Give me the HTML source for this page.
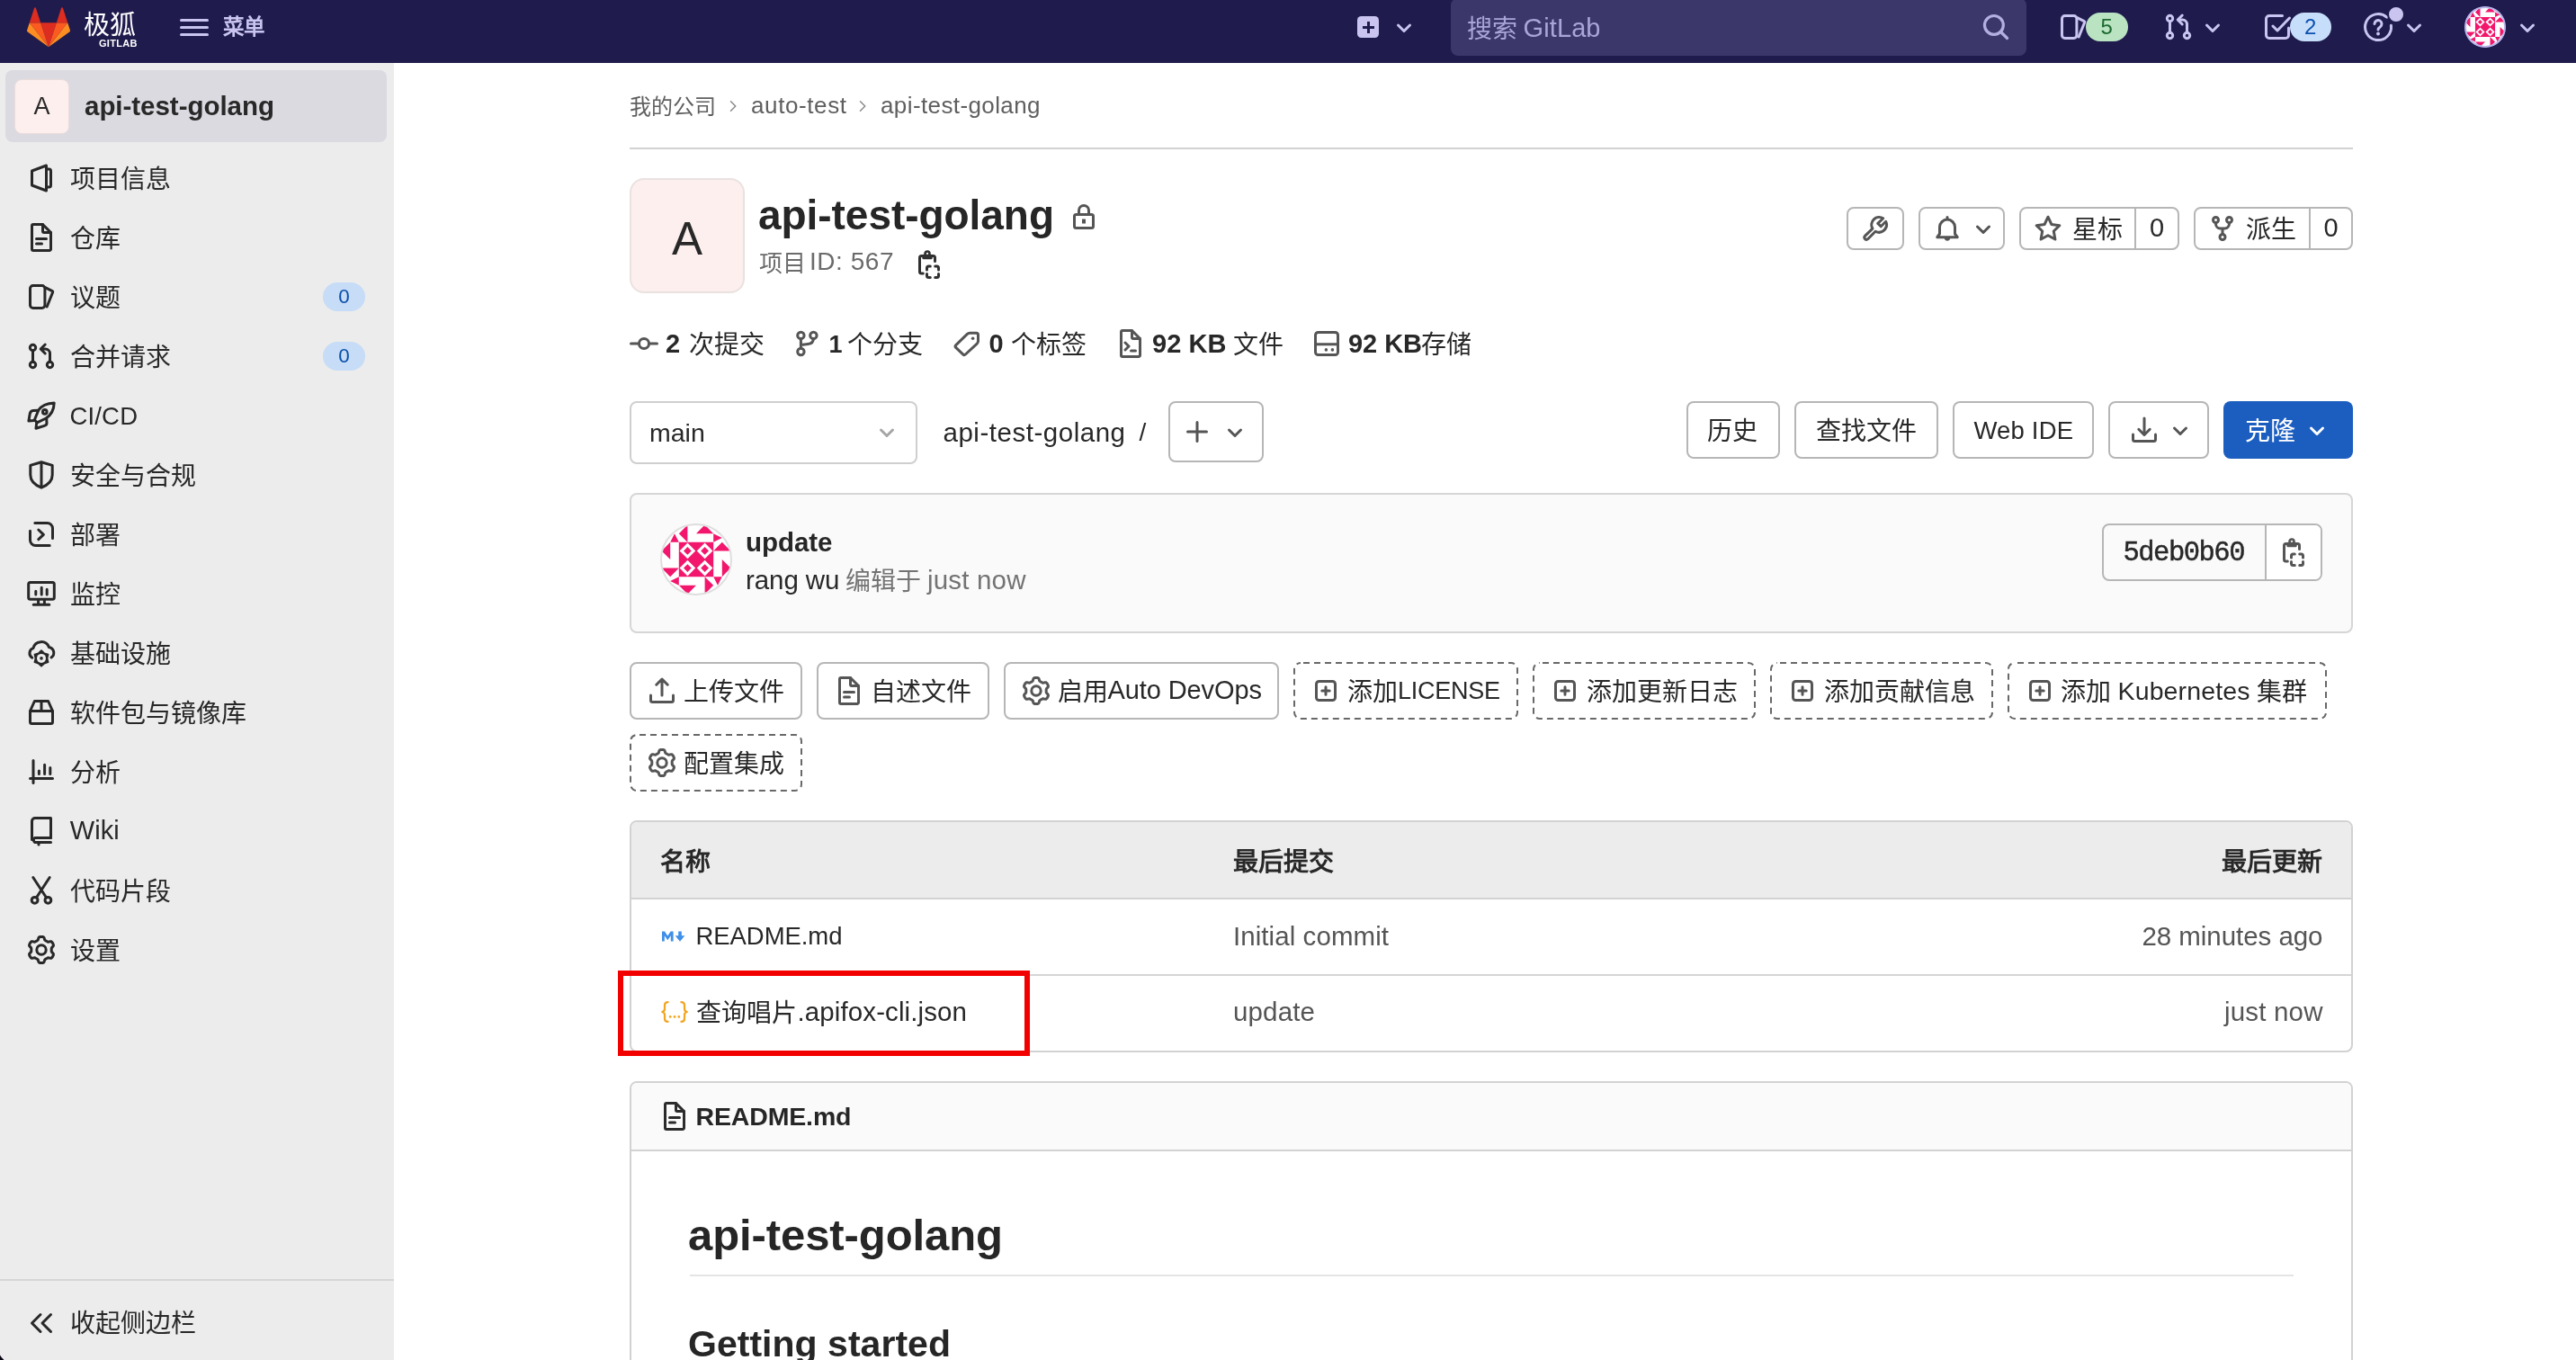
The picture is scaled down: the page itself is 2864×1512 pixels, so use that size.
<!DOCTYPE html>
<html lang="zh-CN"><head><meta charset="utf-8"><title>api-test-golang</title><style>
*{box-sizing:border-box;margin:0;padding:0}
html,body{width:2864px;height:1512px;overflow:hidden;background:#fff}
body{position:relative;font-family:"Liberation Sans", sans-serif;color:#282828;-webkit-font-smoothing:antialiased}
#app{position:absolute;left:0;top:0;width:2864px;height:1512px;overflow:hidden;will-change:transform}
div,svg.ic,.t{position:absolute}
.t{white-space:pre;line-height:1;display:block}
svg.ic{overflow:visible}
.btn{border:2px solid #b6b6b6;border-radius:8px;background:#fff}
</style></head>
<body>
<div id="app">
<div style="left:0px;top:0px;width:2864px;height:70px;background:#1f1b4d"></div>
<svg class="ic" style="left:30px;top:7.5px;width:48px;height:44.5px" viewBox="0 0 210 194"><path fill="#dc2d20" d="M105.06 193.66l38.64-118.92H66.42z"/><path fill="#fb5a20" d="M105.06 193.66L66.42 74.73H12.27z"/><path fill="#fc8d22" d="M12.27 74.73L.53 110.87c-1.07 3.3.1 6.9 2.9 8.94l101.63 73.84z"/><path fill="#dc2d20" d="M12.27 74.73h54.15L43.15 3.11c-1.2-3.69-6.41-3.69-7.61 0z"/><path fill="#fb5a20" d="M105.06 193.66l38.64-118.93h54.15z"/><path fill="#fc8d22" d="M197.85 74.73l11.75 36.14c1.07 3.3-.1 6.9-2.91 8.94L105.06 193.65z"/><path fill="#dc2d20" d="M197.85 74.73H143.7l23.27-71.62c1.2-3.69 6.41-3.69 7.61 0z"/></svg>
<span class="t" style="left:93.34px;top:14.15px;font-size:29px;color:#fff;font-weight:500;">极狐</span>
<span class="t" style="left:110.00px;top:43.19px;font-size:11.0px;color:#fff;font-weight:700;letter-spacing:0.312px;">GITLAB</span>
<div style="left:200px;top:20.5px;width:32px;height:3px;background:#c9c5f0;border-radius:1.5px"></div>
<div style="left:200px;top:28.5px;width:32px;height:3px;background:#c9c5f0;border-radius:1.5px"></div>
<div style="left:200px;top:36.5px;width:32px;height:3px;background:#c9c5f0;border-radius:1.5px"></div>
<span class="t" style="left:247.56px;top:19.31px;font-size:23.5px;color:#c9c5f0;font-weight:700;">菜单</span>
<div style="left:1509px;top:18px;width:24px;height:24px;background:#c9c5f0;border-radius:4.5px"></div>
<div style="left:1514.5px;top:28.5px;width:13px;height:3px;background:#1f1b4d"></div>
<div style="left:1519.5px;top:23.5px;width:3px;height:13px;background:#1f1b4d"></div>
<svg class="ic" style="left:1545px;top:14.75px;width:32px;height:32px;color:#c9c5f0;" viewBox="0 0 16 16" fill="none" stroke="currentColor" stroke-width="1.5" stroke-linecap="round" stroke-linejoin="round"><path d="M4.750 6.500 8 9.750l3.250-3.250" /></svg>
<div style="left:1613px;top:-2px;width:640px;height:64px;background:#3b376a;border-radius:8px"></div>
<span class="t" style="left:1630.88px;top:18.50px;font-size:28px;color:#a9a5d9;">搜索</span>
<span class="t" style="left:1693.50px;top:16.95px;font-size:29.0px;color:#a9a5d9;letter-spacing:0.111px;">GitLab</span>
<svg class="ic" style="left:2203px;top:14px;width:32px;height:32px;color:#b3afe0;" viewBox="0 0 16 16" fill="none" stroke="currentColor" stroke-width="1.6" stroke-linecap="round" stroke-linejoin="round"><circle cx="6.950" cy="6.950" r="5.200"/><path d="M10.750 10.750 14.300 14.250" /></svg>
<svg class="ic" style="left:2289px;top:14px;width:32px;height:32px;color:#c9c5f0;" viewBox="0 0 16 16" fill="none" stroke="currentColor" stroke-width="1.5" stroke-linecap="round" stroke-linejoin="round"><rect x="1.75" y="1.8" width="8.2" height="12.4" rx="1.6"/><path d="M10.400 2.900l3.700 1.900a.5.5 0 0 1 .250.600L11.100 13.500" /></svg>
<div style="left:2319px;top:14px;width:47px;height:32px;background:#b9e3c1;border-radius:16px"></div>
<span class="t" style="left:2335.50px;top:18.18px;font-size:24px;color:#1d6a31;">5</span>
<svg class="ic" style="left:2406px;top:14px;width:32px;height:32px;color:#c9c5f0;" viewBox="0 0 16 16" fill="none" stroke="currentColor" stroke-width="1.5" stroke-linecap="round" stroke-linejoin="round"><circle cx="3.25" cy="3.25" r="1.6"/><circle cx="3.25" cy="12.75" r="1.6"/><circle cx="12.75" cy="12.75" r="1.6"/><path d="M3.25 4.9v6.2" /><path d="M10.100 1.500 7.600 4l2.500 2.500" /><path d="M8 4h2.25a2.5 2.5 0 0 1 2.5 2.5v4.6" /></svg>
<svg class="ic" style="left:2444px;top:14.75px;width:32px;height:32px;color:#c9c5f0;" viewBox="0 0 16 16" fill="none" stroke="currentColor" stroke-width="1.5" stroke-linecap="round" stroke-linejoin="round"><path d="M4.750 6.500 8 9.750l3.250-3.250" /></svg>
<svg class="ic" style="left:2516px;top:14px;width:32px;height:32px;color:#c9c5f0;" viewBox="0 0 16 16" fill="none" stroke="currentColor" stroke-width="1.5" stroke-linecap="round" stroke-linejoin="round"><path d="M14.250 8.500v4a1.750 1.750 0 0 1-1.750 1.750h-9A1.750 1.750 0 0 1 1.750 12.500v-9A1.750 1.750 0 0 1 3.500 1.750h7.250" /><path d="M5.500 7.500 8 10l6.750-7" /></svg>
<div style="left:2546px;top:14px;width:46px;height:32px;background:#c7defa;border-radius:16px"></div>
<span class="t" style="left:2562.00px;top:18.18px;font-size:24px;color:#0b50b0;">2</span>
<svg class="ic" style="left:2628px;top:14px;width:32px;height:32px;color:#c9c5f0;" viewBox="0 0 16 16" fill="none" stroke="currentColor" stroke-width="1.5" stroke-linecap="round" stroke-linejoin="round"><path d="M12.800 2.600A7.250 7.250 0 1 0 15.200 7.100" /><path d="M6 6.250a2 2 0 1 1 3.100 1.700c-.700.450-1.100.850-1.100 1.550" /><circle cx="8" cy="11.750" r=".95" fill="currentColor" stroke="none"/></svg>
<div style="left:2654px;top:6px;width:20px;height:20px;background:#c9c5f0;border-radius:50%;border:2px solid #1f1b4d"></div>
<svg class="ic" style="left:2668px;top:14.75px;width:32px;height:32px;color:#c9c5f0;" viewBox="0 0 16 16" fill="none" stroke="currentColor" stroke-width="1.5" stroke-linecap="round" stroke-linejoin="round"><path d="M4.750 6.500 8 9.750l3.250-3.250" /></svg>
<svg class="ic" style="left:2740px;top:7px;width:46px;height:46px" viewBox="0 0 80 80"><defs><clipPath id="cn"><circle cx="40" cy="40" r="39.2"/></clipPath></defs><g clip-path="url(#cn)"><rect width="80" height="80" fill="#fff"/><path d="M20.80 20.80L59.20 20.80L59.20 59.20L20.80 59.20z" fill="#f2176c"/><path d="M30.40 21.57L39.23 30.40L30.40 39.23L21.57 30.40z" fill="#fff"/><path d="M30.40 25.98L34.82 30.40L30.40 34.82L25.98 30.40z" fill="#f2176c"/><path d="M30.40 40.77L39.23 49.60L30.40 58.43L21.57 49.60z" fill="#fff"/><path d="M30.40 45.18L34.82 49.60L30.40 54.02L25.98 49.60z" fill="#f2176c"/><path d="M49.60 21.57L58.43 30.40L49.60 39.23L40.77 30.40z" fill="#fff"/><path d="M49.60 25.98L54.02 30.40L49.60 34.82L45.18 30.40z" fill="#f2176c"/><path d="M49.60 40.77L58.43 49.60L49.60 58.43L40.77 49.60z" fill="#fff"/><path d="M49.60 45.18L54.02 49.60L49.60 54.02L45.18 49.60z" fill="#f2176c"/><path d="M11.20 20.80L20.80 20.80L16.00 11.20zM59.20 11.20L59.20 20.80L68.80 16.00zM68.80 59.20L59.20 59.20L64.00 68.80zM20.80 68.80L20.80 59.20L11.20 64.00zM30.40 1.60L30.40 20.80L20.80 11.20zM78.40 30.40L59.20 30.40L68.80 20.80zM49.60 78.40L49.60 59.20L59.20 68.80zM1.60 49.60L20.80 49.60L11.20 59.20zM40.00 11.20L59.20 11.20L49.60 1.60zM68.80 40.00L68.80 59.20L78.40 49.60zM40.00 68.80L20.80 68.80L30.40 78.40zM11.20 40.00L11.20 20.80L1.60 30.40z" fill="#f2176c"/></g><circle cx="40" cy="40" r="38.26" fill="none" stroke="#b9b4ea" stroke-width="3.48"/></svg>
<svg class="ic" style="left:2794px;top:14.75px;width:32px;height:32px;color:#c9c5f0;" viewBox="0 0 16 16" fill="none" stroke="currentColor" stroke-width="1.5" stroke-linecap="round" stroke-linejoin="round"><path d="M4.750 6.500 8 9.750l3.250-3.250" /></svg>
<div style="left:0px;top:70px;width:438px;height:1442px;background:#ececec"></div>
<div style="left:6px;top:78px;width:424px;height:80px;background:#dbdae0;border-radius:8px"></div>
<div style="left:15.5px;top:87.5px;width:61px;height:61px;background:#fcefed;border-radius:8px;border:1.5px solid #e9dcdb"></div>
<span class="t" style="left:37.50px;top:105.14px;font-size:27.0px;color:#282828;">A</span>
<span class="t" style="left:94.00px;top:102.53px;font-size:29.5px;color:#282828;font-weight:700;letter-spacing:-0.030px;">api-test-golang</span>
<svg class="ic" style="left:30px;top:182px;width:32px;height:32px;color:#282828;" viewBox="0 0 16 16" fill="none" stroke="currentColor" stroke-width="1.5" stroke-linecap="round" stroke-linejoin="round"><path d="M10.75 1 2.75 4v8l8 3z" /><path d="M10.75 3h1.5a1 1 0 0 1 1 1v8a1 1 0 0 1-1 1h-1.5" /></svg>
<span class="t" style="left:77.88px;top:185.50px;font-size:28px;color:#282828;">项目信息</span>
<svg class="ic" style="left:30px;top:248px;width:32px;height:32px;color:#282828;" viewBox="0 0 16 16" fill="none" stroke="currentColor" stroke-width="1.5" stroke-linecap="round" stroke-linejoin="round"><path d="M3.5.75h5.25l4.5 4.5v9.25a.75.75 0 0 1-.75.75h-9a.75.75 0 0 1-.75-.75V1.5a.75.75 0 0 1 .75-.75z" /><path d="M8.75.75v3.75a.75.75 0 0 0 .75.75h3.75" /><path d="M5.25 8.75h5.5M5.25 11.5h3" /></svg>
<span class="t" style="left:77.88px;top:251.50px;font-size:28px;color:#282828;">仓库</span>
<svg class="ic" style="left:30px;top:314px;width:32px;height:32px;color:#282828;" viewBox="0 0 16 16" fill="none" stroke="currentColor" stroke-width="1.5" stroke-linecap="round" stroke-linejoin="round"><rect x="1.75" y="1.8" width="8.2" height="12.4" rx="1.6"/><path d="M10.400 2.900l3.700 1.900a.5.5 0 0 1 .250.600L11.100 13.500" /></svg>
<span class="t" style="left:77.88px;top:317.50px;font-size:28px;color:#282828;">议题</span>
<div style="left:359px;top:314px;width:47px;height:32px;background:#c6dcf7;border-radius:16px"></div>
<span class="t" style="left:376.30px;top:318.95px;font-size:22.5px;color:#0b4fa8;">0</span>
<svg class="ic" style="left:30px;top:380px;width:32px;height:32px;color:#282828;" viewBox="0 0 16 16" fill="none" stroke="currentColor" stroke-width="1.5" stroke-linecap="round" stroke-linejoin="round"><circle cx="3.25" cy="3.25" r="1.6"/><circle cx="3.25" cy="12.75" r="1.6"/><circle cx="12.75" cy="12.75" r="1.6"/><path d="M3.25 4.9v6.2" /><path d="M10.100 1.500 7.600 4l2.500 2.500" /><path d="M8 4h2.25a2.5 2.5 0 0 1 2.5 2.5v4.6" /></svg>
<span class="t" style="left:77.88px;top:383.50px;font-size:28px;color:#282828;">合并请求</span>
<div style="left:359px;top:380px;width:47px;height:32px;background:#c6dcf7;border-radius:16px"></div>
<span class="t" style="left:376.30px;top:384.95px;font-size:22.5px;color:#0b4fa8;">0</span>
<svg class="ic" style="left:30px;top:446px;width:32px;height:32px;color:#282828;" viewBox="0 0 16 16" fill="none" stroke="currentColor" stroke-width="1.5" stroke-linecap="round" stroke-linejoin="round"><path d="M15.100.950C11.200 1.100 8 2.600 6.400 5L4.200 10.400l1.400 1.500 5-2.400C13.300 7.700 15 4.600 15.100.950z" /><circle cx="9.900" cy="5.950" r="1.150"/><path d="M6.200 5.150 3.300 5.200C2.300 5.300 1.750 6.100 1.600 7.100L.950 10.950 4 10.800" /><path d="M10.850 9.600 11 12.300c0 .800-.600 1.200-1.300 1.400L5 15.100l.350-3" /></svg>
<span class="t" style="left:77.50px;top:448.72px;font-size:27.5px;color:#282828;letter-spacing:0.157px;">CI/CD</span>
<svg class="ic" style="left:30px;top:512px;width:32px;height:32px;color:#282828;" viewBox="0 0 16 16" fill="none" stroke="currentColor" stroke-width="1.5" stroke-linecap="round" stroke-linejoin="round"><path d="M8 .85 1.9 2.7V8c0 3.2 2.2 5.5 6.1 7.1 3.900-1.600 6.100-3.900 6.100-7.100V2.700z" /><path d="M8 1.2v13.6" /></svg>
<span class="t" style="left:77.88px;top:515.50px;font-size:28px;color:#282828;">安全与合规</span>
<svg class="ic" style="left:30px;top:578px;width:32px;height:32px;color:#282828;" viewBox="0 0 16 16" fill="none" stroke="currentColor" stroke-width="1.5" stroke-linecap="round" stroke-linejoin="round"><path d="M4.4 1.75h6.85a3 3 0 0 1 3 3V10.300" /><path d="M1.75 6.1v5.15a3 3 0 0 0 3 3H12.600" /><path d="M6.4 5.5 9.2 8.150 6.400 10.800" /></svg>
<span class="t" style="left:77.88px;top:581.50px;font-size:28px;color:#282828;">部署</span>
<svg class="ic" style="left:30px;top:644px;width:32px;height:32px;color:#282828;" viewBox="0 0 16 16" fill="none" stroke="currentColor" stroke-width="1.5" stroke-linecap="round" stroke-linejoin="round"><rect x=".85" y="1.75" width="14.3" height="9.4" rx="1"/><path d="M6.3 11.2v2.8M9.7 11.2v2.8M3.600 14.150h8.800" /><path d="M4.9 6.600v1.900M8.100 4.600v3.900M11.100 5.600v2.900" /></svg>
<span class="t" style="left:77.88px;top:647.50px;font-size:28px;color:#282828;">监控</span>
<svg class="ic" style="left:30px;top:710px;width:32px;height:32px;color:#282828;" viewBox="0 0 16 16" fill="none" stroke="currentColor" stroke-width="1.5" stroke-linecap="round" stroke-linejoin="round"><path d="M2.900 10.600A2.900 2.900 0 0 1 3.450 5.350 4.600 4.600 0 0 1 12.200 4.700 3.200 3.200 0 0 1 13.500 10.500" /><path d="M8.00 6.60L6.38 8.14L4.23 8.78L4.75 10.95L4.23 13.12L6.37 13.76L8.00 15.30L9.62 13.76L11.77 13.12L11.25 10.95L11.77 8.77L9.62 8.14z" fill="currentColor" stroke-width=".9"/><circle cx="8" cy="10.950" r="2.500" fill="#ececec" stroke="none"/><circle cx="8" cy="10.950" r=".900" fill="currentColor" stroke="none"/></svg>
<span class="t" style="left:77.88px;top:713.50px;font-size:28px;color:#282828;">基础设施</span>
<svg class="ic" style="left:30px;top:776px;width:32px;height:32px;color:#282828;" viewBox="0 0 16 16" fill="none" stroke="currentColor" stroke-width="1.5" stroke-linecap="round" stroke-linejoin="round"><path d="M1.75 7.25 4.2 1.75h7.6l2.45 5.5v6a1 1 0 0 1-1 1H2.75a1 1 0 0 1-1-1z" /><path d="M1.75 7.25h12.5M8 1.75v5.500" /></svg>
<span class="t" style="left:77.88px;top:779.50px;font-size:28px;color:#282828;">软件包与镜像库</span>
<svg class="ic" style="left:30px;top:842px;width:32px;height:32px;color:#282828;" viewBox="0 0 16 16" fill="none" stroke="currentColor" stroke-width="1.5" stroke-linecap="round" stroke-linejoin="round"><path d="M3.500 1.750v12.500M1.750 11.750h12.500" /><path d="M6.700 7.500v1.700M9.800 4.100v5.100M12.900 5.800v3.400" /></svg>
<span class="t" style="left:77.88px;top:845.50px;font-size:28px;color:#282828;">分析</span>
<svg class="ic" style="left:30px;top:908px;width:32px;height:32px;color:#282828;" viewBox="0 0 16 16" fill="none" stroke="currentColor" stroke-width="1.5" stroke-linecap="round" stroke-linejoin="round"><path d="M13.250 11.700V.750H4.500a1.750 1.750 0 0 0-1.750 1.750v10.200" /><path d="M13.250 11.750h-8.900a1.500 1.500 0 0 0 0 2.500h8.900" /><path d="M6.500 14.250v1.300" /></svg>
<span class="t" style="left:77.80px;top:909.45px;font-size:29.0px;color:#282828;letter-spacing:0.079px;">Wiki</span>
<svg class="ic" style="left:30px;top:974px;width:32px;height:32px;color:#282828;" viewBox="0 0 16 16" fill="none" stroke="currentColor" stroke-width="1.5" stroke-linecap="round" stroke-linejoin="round"><circle cx="4.3" cy="13.4" r="1.7"/><circle cx="11.7" cy="13.4" r="1.7"/><path d="M5.300 11.900 12.600 .750M10.700 11.900 3.400 .750" /></svg>
<span class="t" style="left:77.88px;top:977.50px;font-size:28px;color:#282828;">代码片段</span>
<svg class="ic" style="left:30px;top:1040px;width:32px;height:32px;color:#282828;" viewBox="0 0 16 16" fill="none" stroke="currentColor" stroke-width="1.5" stroke-linecap="round" stroke-linejoin="round"><path d="M13.60 8.00 L13.60 7.76 L13.60 7.51 L13.60 7.26 L13.67 7.00 L13.86 6.70 L14.23 6.33 L14.58 5.93 L14.72 5.56 L14.70 5.23 L14.60 4.92 L14.47 4.63 L14.32 4.35 L14.15 4.08 L13.97 3.82 L13.75 3.59 L13.48 3.41 L13.09 3.34 L12.56 3.44 L12.05 3.58 L11.70 3.59 L11.44 3.52 L11.22 3.40 L11.01 3.27 L10.80 3.15 L10.59 3.03 L10.37 2.91 L10.16 2.78 L9.97 2.59 L9.80 2.28 L9.67 1.77 L9.49 1.26 L9.24 0.96 L8.95 0.82 L8.63 0.74 L8.32 0.71 L8.00 0.70 L7.68 0.71 L7.37 0.74 L7.05 0.82 L6.76 0.96 L6.51 1.26 L6.33 1.77 L6.20 2.28 L6.03 2.59 L5.84 2.78 L5.63 2.91 L5.41 3.03 L5.20 3.15 L4.99 3.27 L4.78 3.40 L4.56 3.52 L4.30 3.59 L3.95 3.58 L3.44 3.44 L2.91 3.34 L2.52 3.41 L2.25 3.59 L2.03 3.82 L1.85 4.08 L1.68 4.35 L1.53 4.63 L1.40 4.92 L1.30 5.23 L1.28 5.56 L1.42 5.93 L1.77 6.33 L2.14 6.70 L2.33 7.00 L2.40 7.26 L2.40 7.51 L2.40 7.76 L2.40 8.00 L2.40 8.24 L2.40 8.49 L2.40 8.74 L2.33 9.00 L2.14 9.30 L1.77 9.67 L1.42 10.07 L1.28 10.44 L1.30 10.77 L1.40 11.08 L1.53 11.37 L1.68 11.65 L1.85 11.92 L2.03 12.18 L2.25 12.41 L2.52 12.59 L2.91 12.66 L3.44 12.56 L3.95 12.42 L4.30 12.41 L4.56 12.48 L4.78 12.60 L4.99 12.73 L5.20 12.85 L5.41 12.97 L5.63 13.09 L5.84 13.22 L6.03 13.41 L6.20 13.72 L6.33 14.23 L6.51 14.74 L6.76 15.04 L7.05 15.18 L7.37 15.26 L7.68 15.29 L8.00 15.30 L8.32 15.29 L8.63 15.26 L8.95 15.18 L9.24 15.04 L9.49 14.74 L9.67 14.23 L9.80 13.72 L9.97 13.41 L10.16 13.22 L10.37 13.09 L10.59 12.97 L10.80 12.85 L11.01 12.73 L11.22 12.60 L11.44 12.48 L11.70 12.41 L12.05 12.42 L12.56 12.56 L13.09 12.66 L13.48 12.59 L13.75 12.41 L13.97 12.18 L14.15 11.92 L14.32 11.65 L14.47 11.37 L14.60 11.08 L14.70 10.77 L14.72 10.44 L14.58 10.07 L14.23 9.67 L13.86 9.30 L13.67 9.00 L13.60 8.74 L13.60 8.49 L13.60 8.24Z" /><circle cx="8" cy="8" r="2.6"/></svg>
<span class="t" style="left:77.88px;top:1043.50px;font-size:28px;color:#282828;">设置</span>
<div style="left:0px;top:1422px;width:438px;height:2px;background:#d6d6d6"></div>
<svg class="ic" style="left:30px;top:1454.5px;width:32px;height:32px;color:#282828;" viewBox="0 0 16 16" fill="none" stroke="currentColor" stroke-width="1.5" stroke-linecap="round" stroke-linejoin="round"><path d="M7.500 3.250 2.750 8l4.750 4.750M13.250 3.250 8.500 8l4.750 4.750" /></svg>
<span class="t" style="left:78.48px;top:1458.00px;font-size:28px;color:#282828;">收起侧边栏</span>
<svg class="ic" style="left:0;top:1506px;width:5px;height:6px" viewBox="0 0 5 6"><path d="M0 .400Q1.600 3.400 4.500 6H0z" fill="#0c0714"/></svg>
<span class="t" style="left:699.54px;top:106.88px;font-size:24px;color:#5f5f5f;">我的公司</span>
<svg class="ic" style="left:806.5px;top:110px;width:16px;height:16px;color:#8a8a8a" viewBox="0 0 16 16" fill="none" stroke="currentColor" stroke-width="1.5" stroke-linecap="round" stroke-linejoin="round"><path d="M5.5 2.750 10.750 8l-5.250 5.250"/></svg>
<span class="t" style="left:835.00px;top:104.49px;font-size:26.0px;color:#5f5f5f;letter-spacing:0.603px;">auto-test</span>
<svg class="ic" style="left:950.5px;top:110px;width:16px;height:16px;color:#8a8a8a" viewBox="0 0 16 16" fill="none" stroke="currentColor" stroke-width="1.5" stroke-linecap="round" stroke-linejoin="round"><path d="M5.5 2.750 10.750 8l-5.250 5.250"/></svg>
<span class="t" style="left:979.00px;top:104.49px;font-size:26.0px;color:#5f5f5f;letter-spacing:0.393px;">api-test-golang</span>
<div style="left:700px;top:164px;width:1916px;height:2px;background:#d2d2d2"></div>
<div style="left:700px;top:198px;width:128px;height:128px;background:#fcefed;border-radius:16px;border:2px solid #e9e2e1"></div>
<span class="t" style="left:747.00px;top:240.33px;font-size:51.0px;color:#282828;">A</span>
<span class="t" style="left:843.00px;top:215.56px;font-size:46.0px;color:#262626;font-weight:700;letter-spacing:-0.048px;">api-test-golang</span>
<svg class="ic" style="left:1189px;top:224.5px;width:32px;height:32px;color:#555555;" viewBox="0 0 16 16" fill="none" stroke="currentColor" stroke-width="1.5" stroke-linecap="round" stroke-linejoin="round"><rect x="2.750" y="6.750" width="10.500" height="7.500" rx="1"/><path d="M5.250 6.500V4.500a2.750 2.750 0 0 1 5.500 0v2" /><rect x="7" y="9.250" width="2" height="2.500" fill="currentColor" stroke="none"/></svg>
<span class="t" style="left:843.96px;top:279.69px;font-size:26px;color:#6b6b6b;">项目</span>
<span class="t" style="left:900.00px;top:277.30px;font-size:28.0px;color:#6b6b6b;letter-spacing:0.537px;">ID: 567</span>
<svg class="ic" style="left:1017px;top:278px;width:32px;height:32px;color:#303030;" viewBox="0 0 16 16" fill="none" stroke="currentColor" stroke-width="1.5" stroke-linecap="round" stroke-linejoin="round"><path d="M4.600 3.250H3.750a1 1 0 0 0-1 1v7.700a1 1 0 0 0 1 1h.900" /><path d="M9.400 3.250h.850a1 1 0 0 1 1 1v2" /><circle cx="7" cy="2" r="1.250" stroke-width="1.300"/><path d="M4.900 4.400V3.150h4.200v1.250z" /><path d="M6.750 10.950v-1a1 1 0 0 1 1-1h.900M11.350 8.950h.900a1 1 0 0 1 1 1v1M13.250 13.250v1a1 1 0 0 1-1 1h-.900M8.650 15.250h-.900a1 1 0 0 1-1-1v-1" /></svg>
<div class="btn" style="left:2053px;top:230px;width:64px;height:48px;"></div>
<svg class="ic" style="left:2069px;top:238px;width:32px;height:32px;color:#555555;" viewBox="0 0 16 16" fill="none" stroke="currentColor" stroke-width="1.5" stroke-linecap="round" stroke-linejoin="round"><path d="M12.330 2.390A4.200 4.200 0 0 0 6.460 8.050L2.200 12.200A1.170 1.170 0 0 0 3.850 13.850L8.060 9.620A4.200 4.200 0 0 0 13.850 4.150L11.100 6.900 9.400 5.200z" /></svg>
<div class="btn" style="left:2133px;top:230px;width:96px;height:48px;"></div>
<svg class="ic" style="left:2149px;top:238px;width:32px;height:32px;color:#555555;" viewBox="0 0 16 16" fill="none" stroke="currentColor" stroke-width="1.5" stroke-linecap="round" stroke-linejoin="round"><path d="M3.750 11V7.300a4.250 4.250 0 0 1 8.500 0V11l1.350 1.850H2.400z" /><path d="M8 1.800v.700" /><path d="M6.900 13.700a1.200 1.200 0 0 0 2.200 0z" fill="currentColor" stroke-width="1"/></svg>
<svg class="ic" style="left:2189px;top:238.75px;width:32px;height:32px;color:#555555;" viewBox="0 0 16 16" fill="none" stroke="currentColor" stroke-width="1.5" stroke-linecap="round" stroke-linejoin="round"><path d="M4.750 6.500 8 9.750l3.250-3.250" /></svg>
<div class="btn" style="left:2245px;top:230px;width:178px;height:48px;"></div>
<div style="left:2373px;top:232px;width:2px;height:44px;background:#b6b6b6"></div>
<svg class="ic" style="left:2261px;top:238px;width:32px;height:32px;color:#555555;" viewBox="0 0 16 16" fill="none" stroke="currentColor" stroke-width="1.5" stroke-linecap="round" stroke-linejoin="round"><path d="M8 1.600l1.950 4.150 4.450.600-3.250 3.150.800 4.500L8 11.850 4.050 14l.800-4.500L1.600 6.350l4.450-.600z" /></svg>
<span class="t" style="left:2303.88px;top:241.50px;font-size:28px;color:#282828;">星标</span>
<span class="t" style="left:2390.00px;top:239.45px;font-size:29.0px;color:#282828;">0</span>
<div class="btn" style="left:2439px;top:230px;width:177px;height:48px;"></div>
<div style="left:2566.5px;top:232px;width:2px;height:44px;background:#b6b6b6"></div>
<svg class="ic" style="left:2455px;top:238px;width:32px;height:32px;color:#555555;" viewBox="0 0 16 16" fill="none" stroke="currentColor" stroke-width="1.5" stroke-linecap="round" stroke-linejoin="round"><circle cx="4.25" cy="3.25" r="1.5"/><circle cx="11.75" cy="3.25" r="1.5"/><circle cx="8" cy="12.75" r="1.5"/><path d="M4.250 4.800v.700a2.500 2.500 0 0 0 2.500 2.500h2.500a2.500 2.500 0 0 0 2.500-2.500v-.700M8 8v3.200" /></svg>
<span class="t" style="left:2496.88px;top:241.50px;font-size:28px;color:#282828;">派生</span>
<span class="t" style="left:2583.50px;top:239.45px;font-size:29.0px;color:#282828;">0</span>
<svg class="ic" style="left:700px;top:366px;width:32px;height:32px;color:#555555;" viewBox="0 0 16 16" fill="none" stroke="currentColor" stroke-width="1.5" stroke-linecap="round" stroke-linejoin="round"><circle cx="8" cy="8" r="2.750"/><path d="M.750 8H5M11 8h4.250" /></svg>
<span class="t" style="left:740.00px;top:367.95px;font-size:29.0px;color:#282828;font-weight:700;">2</span>
<span class="t" style="left:765.88px;top:370.00px;font-size:28px;color:#282828;">次提交</span>
<svg class="ic" style="left:881.5px;top:366px;width:32px;height:32px;color:#555555;" viewBox="0 0 16 16" fill="none" stroke="currentColor" stroke-width="1.5" stroke-linecap="round" stroke-linejoin="round"><circle cx="4.2" cy="3.45" r="1.85"/><circle cx="4.2" cy="12.5" r="1.85"/><circle cx="11.2" cy="3.45" r="1.85"/><path d="M4.200 5.300v5.350M11.200 5.300c0 1.800-1.200 2.800-3 3L4.200 8.700" /></svg>
<span class="t" style="left:921.50px;top:369.64px;font-size:27.0px;color:#282828;font-weight:700;">1</span>
<span class="t" style="left:942.38px;top:370.00px;font-size:28px;color:#282828;">个分支</span>
<svg class="ic" style="left:1059px;top:366px;width:32px;height:32px;color:#555555;" viewBox="0 0 16 16" fill="none" stroke="currentColor" stroke-width="1.5" stroke-linecap="round" stroke-linejoin="round"><path d="M1.900 8.800 8.200 2.700a2 2 0 0 1 1.400-.550h3.650a1 1 0 0 1 1 1v3.500a2 2 0 0 1-.650 1.450L7.200 14a1 1 0 0 1-1.400-.050L1.850 10.200a1 1 0 0 1 .050-1.400z" /><circle cx="11.300" cy="5.150" r=".9" fill="currentColor" stroke="none"/></svg>
<span class="t" style="left:1099.50px;top:367.95px;font-size:29.0px;color:#282828;font-weight:700;">0</span>
<span class="t" style="left:1124.38px;top:370.00px;font-size:28px;color:#282828;">个标签</span>
<svg class="ic" style="left:1241px;top:366px;width:32px;height:32px;color:#555555;" viewBox="0 0 16 16" fill="none" stroke="currentColor" stroke-width="1.5" stroke-linecap="round" stroke-linejoin="round"><path d="M3.500.750h5.250l4.500 4.500v9.250a.750.750 0 0 1-.750.750h-9a.750.750 0 0 1-.750-.750V1.500a.750.750 0 0 1 .750-.750z" /><path d="M8.750.750v3.750a.750.750 0 0 0 .750.750h3.750" /><path d="M5 7.500 7 9.500 5 11.500M8.250 12h2.500" /></svg>
<span class="t" style="left:1281.00px;top:367.95px;font-size:29.0px;color:#282828;font-weight:700;letter-spacing:0.073px;">92 KB</span>
<span class="t" style="left:1370.88px;top:370.00px;font-size:28px;color:#282828;">文件</span>
<svg class="ic" style="left:1459px;top:366px;width:32px;height:32px;color:#555555;" viewBox="0 0 16 16" fill="none" stroke="currentColor" stroke-width="1.5" stroke-linecap="round" stroke-linejoin="round"><rect x="1.750" y="1.750" width="12.500" height="12.500" rx="1.500"/><path d="M1.750 8.400h12.500" /><circle cx="7.700" cy="11.450" r=".9" fill="currentColor" stroke="none"/><circle cx="11.200" cy="11.450" r=".9" fill="currentColor" stroke="none"/></svg>
<span class="t" style="left:1499.00px;top:367.95px;font-size:29.0px;color:#282828;font-weight:700;letter-spacing:-0.052px;">92 KB</span>
<span class="t" style="left:1580.38px;top:370.00px;font-size:28px;color:#282828;">存储</span>
<div style="left:700px;top:446px;width:320px;height:70px;border:2px solid #cfcfcf;border-radius:8px;background:#fff"></div>
<span class="t" style="left:721.90px;top:466.87px;font-size:28.5px;color:#282828;letter-spacing:0.071px;">main</span>
<svg class="ic" style="left:969.5px;top:464.75px;width:32px;height:32px;color:#a6a6a6;" viewBox="0 0 16 16" fill="none" stroke="currentColor" stroke-width="1.5" stroke-linecap="round" stroke-linejoin="round"><path d="M4.750 6.500 8 9.750l3.250-3.250" /></svg>
<span class="t" style="left:1048.50px;top:466.03px;font-size:29.5px;color:#282828;letter-spacing:0.524px;">api-test-golang</span>
<span class="t" style="left:1266.50px;top:467.30px;font-size:28px;color:#282828;">/</span>
<div class="btn" style="left:1299px;top:446px;width:106px;height:68px;"></div>
<svg class="ic" style="left:1315px;top:464px;width:32px;height:32px;color:#555555;" viewBox="0 0 16 16" fill="none" stroke="currentColor" stroke-width="1.5" stroke-linecap="round" stroke-linejoin="round"><path d="M8 2.750v10.500M2.750 8h10.500" /></svg>
<svg class="ic" style="left:1357px;top:464.75px;width:32px;height:32px;color:#555555;" viewBox="0 0 16 16" fill="none" stroke="currentColor" stroke-width="1.5" stroke-linecap="round" stroke-linejoin="round"><path d="M4.750 6.500 8 9.750l3.250-3.250" /></svg>
<div class="btn" style="left:1875px;top:446px;width:104px;height:64px;"></div>
<span class="t" style="left:1898.38px;top:465.50px;font-size:28px;color:#282828;">历史</span>
<div class="btn" style="left:1995px;top:446px;width:160px;height:64px;"></div>
<span class="t" style="left:2018.88px;top:465.50px;font-size:28px;color:#282828;">查找文件</span>
<div class="btn" style="left:2171px;top:446px;width:157px;height:64px;"></div>
<span class="t" style="left:2194.50px;top:464.72px;font-size:27.5px;color:#282828;letter-spacing:0.160px;">Web IDE</span>
<div class="btn" style="left:2344px;top:446px;width:112px;height:64px;"></div>
<svg class="ic" style="left:2368px;top:462px;width:32px;height:32px;color:#555555;" viewBox="0 0 16 16" fill="none" stroke="currentColor" stroke-width="1.5" stroke-linecap="round" stroke-linejoin="round"><path d="M8 1.500v9M4.900 7.650 8 10.750l3.100-3.100" /><path d="M1.750 10.500v2.750a1 1 0 0 0 1 1h10.500a1 1 0 0 0 1-1V10.500" /></svg>
<svg class="ic" style="left:2407.5px;top:463.25px;width:32px;height:32px;color:#555555;" viewBox="0 0 16 16" fill="none" stroke="currentColor" stroke-width="1.5" stroke-linecap="round" stroke-linejoin="round"><path d="M4.750 6.500 8 9.750l3.250-3.250" /></svg>
<div style="left:2472px;top:446px;width:144px;height:64px;background:#1c5ec0;border-radius:8px"></div>
<span class="t" style="left:2495.88px;top:465.50px;font-size:28px;color:#fff;">克隆</span>
<svg class="ic" style="left:2560px;top:462.75px;width:32px;height:32px;color:#fff;" viewBox="0 0 16 16" fill="none" stroke="currentColor" stroke-width="1.5" stroke-linecap="round" stroke-linejoin="round"><path d="M4.750 6.500 8 9.750l3.250-3.250" /></svg>
<div style="left:700px;top:548px;width:1916px;height:156px;background:#fafafa;border:2px solid #d6d6d6;border-radius:8px"></div>
<svg class="ic" style="left:734px;top:582px;width:80px;height:80px" viewBox="0 0 80 80"><defs><clipPath id="cc"><circle cx="40" cy="40" r="39.2"/></clipPath></defs><g clip-path="url(#cc)"><rect width="80" height="80" fill="#fff"/><path d="M20.80 20.80L59.20 20.80L59.20 59.20L20.80 59.20z" fill="#f2176c"/><path d="M30.40 21.57L39.23 30.40L30.40 39.23L21.57 30.40z" fill="#fff"/><path d="M30.40 25.98L34.82 30.40L30.40 34.82L25.98 30.40z" fill="#f2176c"/><path d="M30.40 40.77L39.23 49.60L30.40 58.43L21.57 49.60z" fill="#fff"/><path d="M30.40 45.18L34.82 49.60L30.40 54.02L25.98 49.60z" fill="#f2176c"/><path d="M49.60 21.57L58.43 30.40L49.60 39.23L40.77 30.40z" fill="#fff"/><path d="M49.60 25.98L54.02 30.40L49.60 34.82L45.18 30.40z" fill="#f2176c"/><path d="M49.60 40.77L58.43 49.60L49.60 58.43L40.77 49.60z" fill="#fff"/><path d="M49.60 45.18L54.02 49.60L49.60 54.02L45.18 49.60z" fill="#f2176c"/><path d="M11.20 20.80L20.80 20.80L16.00 11.20zM59.20 11.20L59.20 20.80L68.80 16.00zM68.80 59.20L59.20 59.20L64.00 68.80zM20.80 68.80L20.80 59.20L11.20 64.00zM30.40 1.60L30.40 20.80L20.80 11.20zM78.40 30.40L59.20 30.40L68.80 20.80zM49.60 78.40L49.60 59.20L59.20 68.80zM1.60 49.60L20.80 49.60L11.20 59.20zM40.00 11.20L59.20 11.20L49.60 1.60zM68.80 40.00L68.80 59.20L78.40 49.60zM40.00 68.80L20.80 68.80L30.40 78.40zM11.20 40.00L11.20 20.80L1.60 30.40z" fill="#f2176c"/></g><circle cx="40" cy="40" r="39.00" fill="none" stroke="#dedede" stroke-width="2.00"/></svg>
<span class="t" style="left:829.00px;top:588.03px;font-size:29.5px;color:#262626;font-weight:700;letter-spacing:-0.040px;">update</span>
<span class="t" style="left:829.00px;top:630.03px;font-size:29.5px;color:#282828;letter-spacing:-0.077px;">rang wu</span>
<span class="t" style="left:940.38px;top:632.50px;font-size:28px;color:#737373;">编辑于</span>
<span class="t" style="left:1031.00px;top:630.03px;font-size:29.5px;color:#737373;letter-spacing:0.183px;">just now</span>
<div style="left:2337px;top:582px;width:245px;height:64px;border:2px solid #b6b6b6;border-radius:8px;background:#fafafa;overflow:hidden"><div style="left:179px;top:0;width:62px;height:60px;background:#fff;border-left:2px solid #b6b6b6"></div></div>
<span class="t" style="left:2360.50px;top:599.62px;font-size:30.5px;color:#282828;letter-spacing:-1.491px;font-family:'Liberation Mono', monospace;-webkit-text-stroke:0.45px;">5deb0b60</span>
<svg class="ic" style="left:2534px;top:598px;width:32px;height:32px;color:#555555;" viewBox="0 0 16 16" fill="none" stroke="currentColor" stroke-width="1.5" stroke-linecap="round" stroke-linejoin="round"><path d="M4.600 3.250H3.750a1 1 0 0 0-1 1v7.700a1 1 0 0 0 1 1h.900" /><path d="M9.400 3.250h.850a1 1 0 0 1 1 1v2" /><circle cx="7" cy="2" r="1.250" stroke-width="1.300"/><path d="M4.900 4.400V3.150h4.200v1.250z" /><path d="M6.750 10.950v-1a1 1 0 0 1 1-1h.900M11.350 8.950h.900a1 1 0 0 1 1 1v1M13.250 13.250v1a1 1 0 0 1-1 1h-.900M8.650 15.250h-.900a1 1 0 0 1-1-1v-1" /></svg>
<div class="btn" style="left:700px;top:736px;width:192px;height:64px;"></div>
<svg class="ic" style="left:720px;top:752px;width:32px;height:32px;color:#555555;" viewBox="0 0 16 16" fill="none" stroke="currentColor" stroke-width="1.5" stroke-linecap="round" stroke-linejoin="round"><path d="M8 10.500v-9M4.900 4.600 8 1.500l3.100 3.100" /><path d="M1.750 10.500v2.750a1 1 0 0 0 1 1h10.500a1 1 0 0 0 1-1V10.500" /></svg>
<span class="t" style="left:760.38px;top:755.50px;font-size:28px;color:#282828;">上传文件</span>
<div class="btn" style="left:908px;top:736px;width:192px;height:64px;"></div>
<svg class="ic" style="left:928px;top:752px;width:32px;height:32px;color:#555555;" viewBox="0 0 16 16" fill="none" stroke="currentColor" stroke-width="1.5" stroke-linecap="round" stroke-linejoin="round"><path d="M3.5.75h5.25l4.5 4.5v9.25a.75.75 0 0 1-.75.75h-9a.75.75 0 0 1-.75-.75V1.5a.75.75 0 0 1 .75-.75z" /><path d="M8.75.75v3.75a.75.75 0 0 0 .75.75h3.75" /><path d="M5.25 8.75h5.5M5.25 11.5h3" /></svg>
<span class="t" style="left:968.18px;top:755.50px;font-size:28px;color:#282828;">自述文件</span>
<div class="btn" style="left:1116px;top:736px;width:306px;height:64px;"></div>
<svg class="ic" style="left:1136px;top:752px;width:32px;height:32px;color:#555555;" viewBox="0 0 16 16" fill="none" stroke="currentColor" stroke-width="1.5" stroke-linecap="round" stroke-linejoin="round"><path d="M13.60 8.00 L13.60 7.76 L13.60 7.51 L13.60 7.26 L13.67 7.00 L13.86 6.70 L14.23 6.33 L14.58 5.93 L14.72 5.56 L14.70 5.23 L14.60 4.92 L14.47 4.63 L14.32 4.35 L14.15 4.08 L13.97 3.82 L13.75 3.59 L13.48 3.41 L13.09 3.34 L12.56 3.44 L12.05 3.58 L11.70 3.59 L11.44 3.52 L11.22 3.40 L11.01 3.27 L10.80 3.15 L10.59 3.03 L10.37 2.91 L10.16 2.78 L9.97 2.59 L9.80 2.28 L9.67 1.77 L9.49 1.26 L9.24 0.96 L8.95 0.82 L8.63 0.74 L8.32 0.71 L8.00 0.70 L7.68 0.71 L7.37 0.74 L7.05 0.82 L6.76 0.96 L6.51 1.26 L6.33 1.77 L6.20 2.28 L6.03 2.59 L5.84 2.78 L5.63 2.91 L5.41 3.03 L5.20 3.15 L4.99 3.27 L4.78 3.40 L4.56 3.52 L4.30 3.59 L3.95 3.58 L3.44 3.44 L2.91 3.34 L2.52 3.41 L2.25 3.59 L2.03 3.82 L1.85 4.08 L1.68 4.35 L1.53 4.63 L1.40 4.92 L1.30 5.23 L1.28 5.56 L1.42 5.93 L1.77 6.33 L2.14 6.70 L2.33 7.00 L2.40 7.26 L2.40 7.51 L2.40 7.76 L2.40 8.00 L2.40 8.24 L2.40 8.49 L2.40 8.74 L2.33 9.00 L2.14 9.30 L1.77 9.67 L1.42 10.07 L1.28 10.44 L1.30 10.77 L1.40 11.08 L1.53 11.37 L1.68 11.65 L1.85 11.92 L2.03 12.18 L2.25 12.41 L2.52 12.59 L2.91 12.66 L3.44 12.56 L3.95 12.42 L4.30 12.41 L4.56 12.48 L4.78 12.60 L4.99 12.73 L5.20 12.85 L5.41 12.97 L5.63 13.09 L5.84 13.22 L6.03 13.41 L6.20 13.72 L6.33 14.23 L6.51 14.74 L6.76 15.04 L7.05 15.18 L7.37 15.26 L7.68 15.29 L8.00 15.30 L8.32 15.29 L8.63 15.26 L8.95 15.18 L9.24 15.04 L9.49 14.74 L9.67 14.23 L9.80 13.72 L9.97 13.41 L10.16 13.22 L10.37 13.09 L10.59 12.97 L10.80 12.85 L11.01 12.73 L11.22 12.60 L11.44 12.48 L11.70 12.41 L12.05 12.42 L12.56 12.56 L13.09 12.66 L13.48 12.59 L13.75 12.41 L13.97 12.18 L14.15 11.92 L14.32 11.65 L14.47 11.37 L14.60 11.08 L14.70 10.77 L14.72 10.44 L14.58 10.07 L14.23 9.67 L13.86 9.30 L13.67 9.00 L13.60 8.74 L13.60 8.49 L13.60 8.24Z" /><circle cx="8" cy="8" r="2.6"/></svg>
<span class="t" style="left:1176.38px;top:755.50px;font-size:28px;color:#282828;">启用</span>
<span class="t" style="left:1231.50px;top:753.45px;font-size:29.0px;color:#282828;letter-spacing:-0.098px;">Auto DevOps</span>
<svg class="ic" style="left:1438px;top:736px;width:250px;height:64px" viewBox="0 0 250 64"><rect x="1" y="1" width="248" height="62" rx="7" fill="#fff" stroke="#686868" stroke-width="2" stroke-dasharray="7 5" stroke-dashoffset="-3"/></svg>
<svg class="ic" style="left:1458px;top:751.5px;width:32px;height:32px;color:#555555;" viewBox="0 0 16 16" fill="none" stroke="currentColor" stroke-width="1.5" stroke-linecap="round" stroke-linejoin="round"><rect x="2.750" y="2.750" width="10.500" height="10.500" rx="1.500"/><path d="M8 5.900v4.200M5.900 8h4.200" /></svg>
<span class="t" style="left:1498.38px;top:755.50px;font-size:28px;color:#282828;">添加</span>
<span class="t" style="left:1554.00px;top:755.14px;font-size:27.0px;color:#282828;letter-spacing:-0.258px;">LICENSE</span>
<svg class="ic" style="left:1704px;top:736px;width:248px;height:64px" viewBox="0 0 248 64"><rect x="1" y="1" width="246" height="62" rx="7" fill="#fff" stroke="#686868" stroke-width="2" stroke-dasharray="7 5" stroke-dashoffset="-3"/></svg>
<svg class="ic" style="left:1724px;top:751.5px;width:32px;height:32px;color:#555555;" viewBox="0 0 16 16" fill="none" stroke="currentColor" stroke-width="1.5" stroke-linecap="round" stroke-linejoin="round"><rect x="2.750" y="2.750" width="10.500" height="10.500" rx="1.500"/><path d="M8 5.900v4.200M5.900 8h4.200" /></svg>
<span class="t" style="left:1763.88px;top:755.50px;font-size:28px;color:#282828;">添加更新日志</span>
<svg class="ic" style="left:1968px;top:736px;width:248px;height:64px" viewBox="0 0 248 64"><rect x="1" y="1" width="246" height="62" rx="7" fill="#fff" stroke="#686868" stroke-width="2" stroke-dasharray="7 5" stroke-dashoffset="-3"/></svg>
<svg class="ic" style="left:1988px;top:751.5px;width:32px;height:32px;color:#555555;" viewBox="0 0 16 16" fill="none" stroke="currentColor" stroke-width="1.5" stroke-linecap="round" stroke-linejoin="round"><rect x="2.750" y="2.750" width="10.500" height="10.500" rx="1.500"/><path d="M8 5.900v4.200M5.900 8h4.200" /></svg>
<span class="t" style="left:2027.88px;top:755.50px;font-size:28px;color:#282828;">添加贡献信息</span>
<svg class="ic" style="left:2232px;top:736px;width:355px;height:64px" viewBox="0 0 355 64"><rect x="1" y="1" width="353" height="62" rx="7" fill="#fff" stroke="#686868" stroke-width="2" stroke-dasharray="7 5" stroke-dashoffset="-3"/></svg>
<svg class="ic" style="left:2252px;top:751.5px;width:32px;height:32px;color:#555555;" viewBox="0 0 16 16" fill="none" stroke="currentColor" stroke-width="1.5" stroke-linecap="round" stroke-linejoin="round"><rect x="2.750" y="2.750" width="10.500" height="10.500" rx="1.500"/><path d="M8 5.900v4.200M5.900 8h4.200" /></svg>
<span class="t" style="left:2291.38px;top:755.50px;font-size:28px;color:#282828;">添加</span>
<span class="t" style="left:2354.50px;top:753.87px;font-size:28.5px;color:#282828;letter-spacing:0.136px;">Kubernetes</span>
<span class="t" style="left:2508.88px;top:755.50px;font-size:28px;color:#282828;">集群</span>
<svg class="ic" style="left:700px;top:816px;width:192px;height:64px" viewBox="0 0 192 64"><rect x="1" y="1" width="190" height="62" rx="7" fill="#fff" stroke="#686868" stroke-width="2" stroke-dasharray="7 5" stroke-dashoffset="-3"/></svg>
<svg class="ic" style="left:720px;top:832px;width:32px;height:32px;color:#555555;" viewBox="0 0 16 16" fill="none" stroke="currentColor" stroke-width="1.5" stroke-linecap="round" stroke-linejoin="round"><path d="M13.60 8.00 L13.60 7.76 L13.60 7.51 L13.60 7.26 L13.67 7.00 L13.86 6.70 L14.23 6.33 L14.58 5.93 L14.72 5.56 L14.70 5.23 L14.60 4.92 L14.47 4.63 L14.32 4.35 L14.15 4.08 L13.97 3.82 L13.75 3.59 L13.48 3.41 L13.09 3.34 L12.56 3.44 L12.05 3.58 L11.70 3.59 L11.44 3.52 L11.22 3.40 L11.01 3.27 L10.80 3.15 L10.59 3.03 L10.37 2.91 L10.16 2.78 L9.97 2.59 L9.80 2.28 L9.67 1.77 L9.49 1.26 L9.24 0.96 L8.95 0.82 L8.63 0.74 L8.32 0.71 L8.00 0.70 L7.68 0.71 L7.37 0.74 L7.05 0.82 L6.76 0.96 L6.51 1.26 L6.33 1.77 L6.20 2.28 L6.03 2.59 L5.84 2.78 L5.63 2.91 L5.41 3.03 L5.20 3.15 L4.99 3.27 L4.78 3.40 L4.56 3.52 L4.30 3.59 L3.95 3.58 L3.44 3.44 L2.91 3.34 L2.52 3.41 L2.25 3.59 L2.03 3.82 L1.85 4.08 L1.68 4.35 L1.53 4.63 L1.40 4.92 L1.30 5.23 L1.28 5.56 L1.42 5.93 L1.77 6.33 L2.14 6.70 L2.33 7.00 L2.40 7.26 L2.40 7.51 L2.40 7.76 L2.40 8.00 L2.40 8.24 L2.40 8.49 L2.40 8.74 L2.33 9.00 L2.14 9.30 L1.77 9.67 L1.42 10.07 L1.28 10.44 L1.30 10.77 L1.40 11.08 L1.53 11.37 L1.68 11.65 L1.85 11.92 L2.03 12.18 L2.25 12.41 L2.52 12.59 L2.91 12.66 L3.44 12.56 L3.95 12.42 L4.30 12.41 L4.56 12.48 L4.78 12.60 L4.99 12.73 L5.20 12.85 L5.41 12.97 L5.63 13.09 L5.84 13.22 L6.03 13.41 L6.20 13.72 L6.33 14.23 L6.51 14.74 L6.76 15.04 L7.05 15.18 L7.37 15.26 L7.68 15.29 L8.00 15.30 L8.32 15.29 L8.63 15.26 L8.95 15.18 L9.24 15.04 L9.49 14.74 L9.67 14.23 L9.80 13.72 L9.97 13.41 L10.16 13.22 L10.37 13.09 L10.59 12.97 L10.80 12.85 L11.01 12.73 L11.22 12.60 L11.44 12.48 L11.70 12.41 L12.05 12.42 L12.56 12.56 L13.09 12.66 L13.48 12.59 L13.75 12.41 L13.97 12.18 L14.15 11.92 L14.32 11.65 L14.47 11.37 L14.60 11.08 L14.70 10.77 L14.72 10.44 L14.58 10.07 L14.23 9.67 L13.86 9.30 L13.67 9.00 L13.60 8.74 L13.60 8.49 L13.60 8.24Z" /><circle cx="8" cy="8" r="2.6"/></svg>
<span class="t" style="left:760.38px;top:835.50px;font-size:28px;color:#282828;">配置集成</span>
<div style="left:700px;top:912px;width:1916px;height:258px;border:2px solid #d2d2d2;border-radius:8px;background:#fff;overflow:hidden"><div style="left:0;top:0;width:1912px;height:86px;background:#ececec;border-bottom:2px solid #d2d2d2"></div><div style="left:0;top:168.500px;width:1912px;height:2px;background:#d6d6d6"></div></div>
<span class="t" style="left:734.38px;top:944.50px;font-size:28px;color:#282828;font-weight:700;">名称</span>
<span class="t" style="left:1371.38px;top:944.50px;font-size:28px;color:#282828;font-weight:700;">最后提交</span>
<span class="t" style="left:2470.38px;top:944.50px;font-size:28px;color:#282828;font-weight:700;">最后更新</span>
<svg class="ic" style="left:734px;top:1025px;width:32px;height:32px" viewBox="0 0 16 16" fill="#3f8fe8"><path d="M1 5.250h1.500l1.650 2.500 1.650-2.500h1.500v5.500H5.900V7.600L4.150 10.100 2.400 7.600v3.150H1z"/><path d="M10.100 5.250h1.800v2.400h1.800l-2.700 3.250-2.700-3.250h1.800z"/></svg>
<span class="t" style="left:773.50px;top:1027.22px;font-size:27.5px;color:#282828;letter-spacing:-0.062px;">README.md</span>
<span class="t" style="left:1371.00px;top:1025.53px;font-size:29.5px;color:#555;letter-spacing:0.067px;">Initial commit</span>
<span class="t" style="left:2381.50px;top:1025.53px;font-size:29.5px;color:#555;letter-spacing:-0.056px;">28 minutes ago</span>
<svg class="ic" style="left:734px;top:1108.5px;width:32px;height:32px" viewBox="0 0 16 16" fill="none" stroke="#f2a51f" stroke-width="1.100" stroke-linecap="round" stroke-linejoin="round"><path d="M4.300 2.600c-1.300 0-1.800.600-1.800 1.700v2c0 .900-.500 1.500-1.400 1.700.9.200 1.400.800 1.400 1.700v2c0 1.100.500 1.700 1.800 1.700M11.700 2.600c1.300 0 1.800.600 1.800 1.700v2c0 .900.500 1.500 1.400 1.700-.900.200-1.400.800-1.400 1.700v2c0 1.100-.500 1.700-1.800 1.700"/><path d="M5.600 10.700h.01M8 10.700h.01M10.400 10.700h.01" stroke-width="1.400"/></svg>
<span class="t" style="left:773.88px;top:1112.50px;font-size:28px;color:#282828;">查询唱片</span>
<span class="t" style="left:886.50px;top:1110.03px;font-size:29.5px;color:#282828;letter-spacing:0.106px;">.apifox-cli.json</span>
<span class="t" style="left:1371.00px;top:1110.03px;font-size:29.5px;color:#555;letter-spacing:0.154px;">update</span>
<span class="t" style="left:2473.00px;top:1110.03px;font-size:29.5px;color:#555;letter-spacing:0.183px;">just now</span>
<div style="left:686.5px;top:1079px;width:458.5px;height:94.5px;border:6.5px solid #f20000"></div>
<div style="left:700px;top:1202px;width:1916px;height:340px;border:2px solid #d2d2d2;border-radius:8px;background:#fff;overflow:hidden"><div style="left:0;top:0;width:1912px;height:76px;background:#fafafa;border-bottom:2px solid #d2d2d2"></div></div>
<svg class="ic" style="left:734px;top:1225px;width:32px;height:32px;color:#2b2b2b;" viewBox="0 0 16 16" fill="none" stroke="currentColor" stroke-width="1.5" stroke-linecap="round" stroke-linejoin="round"><path d="M3.5.75h5.25l4.5 4.5v9.25a.75.75 0 0 1-.75.75h-9a.75.75 0 0 1-.75-.75V1.5a.75.75 0 0 1 .75-.75z" /><path d="M8.75.75v3.75a.75.75 0 0 0 .75.75h3.75" /><path d="M5.25 8.75h5.5M5.25 11.5h3" /></svg>
<span class="t" style="left:773.50px;top:1226.87px;font-size:28.5px;color:#262626;font-weight:700;letter-spacing:-0.148px;">README.md</span>
<span class="t" style="left:765.00px;top:1349.02px;font-size:49.0px;color:#262626;font-weight:700;letter-spacing:-0.084px;">api-test-golang</span>
<div style="left:767px;top:1417px;width:1783px;height:2px;background:#e4e4e4"></div>
<span class="t" style="left:765.00px;top:1473.79px;font-size:41.0px;color:#262626;font-weight:700;letter-spacing:0.029px;">Getting started</span>
</div>
</body></html>
